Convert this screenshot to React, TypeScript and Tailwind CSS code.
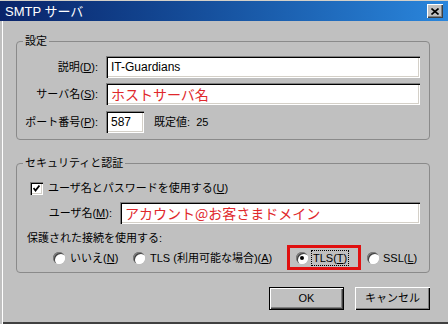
const ui = "font-['Liberation_Sans','Noto_Sans_CJK_JP',sans-serif]"
const sunken =
    'bg-white shadow-[inset_1px_1px_0_#808080,inset_2px_2px_0_#000000,inset_-1px_-1px_0_#ffffff,inset_-2px_-2px_0_#d4d0c8]'

function Radio({ checked }: { checked?: boolean }) {
    return (
        <span className="flex w-[12px] h-[12px] shrink-0 items-center justify-center rounded-full bg-white shadow-[inset_1px_1px_0_#808080,inset_2px_2px_0_#404040,inset_-1px_-1px_0_#ffffff]">
            {checked && <span className="w-[4px] h-[4px] rounded-full bg-black" />}
        </span>
    )
}

function Checkbox() {
    return (
        <span className={`flex w-[13px] h-[13px] shrink-0 items-center justify-center ${sunken}`}>
            <svg width="7" height="7" viewBox="0 0 7 7">
                <path d="M0.5 3 L2.5 5.5 L6.5 0.5" fill="none" stroke="#000" strokeWidth="1.8" />
            </svg>
        </span>
    )
}

function Field({ label, labelW, children, inputW }: { label: React.ReactNode; labelW: string; children: React.ReactNode; inputW: string }) {
    return (
        <div className="flex items-center gap-[8px] h-[22px]">
            <span className={`${labelW} text-right text-[11px] leading-[14px] whitespace-nowrap`}>{label}</span>
            <div className={`${inputW} h-[22px] flex items-center px-[5px] ${sunken}`}>{children}</div>
        </div>
    )
}

export default function App() {
    return (
        <div className={`w-[448px] h-[324px] bg-[#c0c0c0] flex flex-col border-t border-t-[#d4d0c8] text-black ${ui}`}>
            <div className="h-[20px] shrink-0 flex items-center justify-between pl-[5px] pr-[5px] bg-linear-to-r from-[#0a246a] to-[#2a86dc]">
                <span className="text-white text-[13px] leading-none">SMTP サーバ</span>
                <span className="flex w-[16px] h-[14px] items-center justify-center bg-[#c0c0c0] shadow-[inset_1px_1px_0_#ffffff,inset_-1px_-1px_0_#404040,inset_-2px_-2px_0_#808080]">
                    <svg width="8" height="7" viewBox="0 0 8 7">
                        <path d="M0.5 0.5 L7.5 6.5 M7.5 0.5 L0.5 6.5" stroke="#000" strokeWidth="1.6" />
                    </svg>
                </span>
            </div>

            <div className="flex-1 flex flex-col pl-[16px] pr-[18px] shadow-[inset_2px_0_0_#c0c0c0,inset_3px_0_0_#ffffff,inset_0_-2px_0_#404040]">
                <fieldset className="mt-[13px] border border-[#8a8a8a] rounded-[4px]">
                    <legend className="ml-[6px] px-[2px] text-[11px] leading-[14px]">設定</legend>
                    <div className="flex flex-col pt-[8px] pb-[6px]">
                        <Field label={<>説明(<u>D</u>):</>} labelW="w-[81px]" inputW="w-[314px]">
                            <span className="text-[12px] font-['Liberation_Sans',sans-serif]">IT-Guardians</span>
                        </Field>
                        <div className="mt-[5px]">
                            <Field label={<>サーバ名(<u>S</u>):</>} labelW="w-[81px]" inputW="w-[314px]">
                                <span className="text-[14px] leading-none text-[#e0282c] font-['Noto_Sans_CJK_JP',sans-serif]">ホストサーバ名</span>
                            </Field>
                        </div>
                        <div className="mt-[6px] flex items-center">
                            <Field label={<>ポート番号(<u>P</u>):</>} labelW="w-[81px]" inputW="w-[38px]">
                                <span className="text-[12px]">587</span>
                            </Field>
                            <span className="ml-[10px] text-[11px] leading-[14px]">既定値:&nbsp; 25</span>
                        </div>
                    </div>
                </fieldset>

                <fieldset className="mt-[16px] border border-[#8a8a8a] rounded-[4px]">
                    <legend className="ml-[6px] px-[2px] text-[11px] leading-[14px]">セキュリティと認証</legend>
                    <div className="flex flex-col pt-[10px] pb-[2px]">
                        <div className="h-[16px] flex items-center gap-[5px] pl-[13px]">
                            <Checkbox />
                            <span className="text-[11px] leading-[14px]">ユーザ名とパスワードを使用する(<u>U</u>)</span>
                        </div>
                        <div className="mt-[6px]">
                            <Field label={<>ユーザ名(<u>M</u>):</>} labelW="w-[95px]" inputW="w-[300px]">
                                <span className="text-[14px] leading-none text-[#e0282c] font-['Noto_Sans_CJK_JP',sans-serif]">アカウント@お客さまドメイン</span>
                            </Field>
                        </div>
                        <div className="mt-[7px] pl-[10px] text-[11px] leading-[14px]">保護された接続を使用する:</div>
                        <div className="h-[25px] flex items-center pl-[36px] text-[11px] leading-[14px]">
                            <div className="w-[80px] flex items-center gap-[5px]">
                                <Radio />
                                <span>いいえ(<u>N</u>)</span>
                            </div>
                            <div className="w-[154px] flex items-center gap-[5px]">
                                <Radio />
                                <span className="whitespace-nowrap">TLS (利用可能な場合)(<u>A</u>)</span>
                            </div>
                            <div className="w-[74px] h-[25px] flex items-center gap-[3px] pl-[6px] border-[3px] border-[#e01010]">
                                <Radio checked />
                                <span className="border border-dotted border-black px-[1px]">TLS(<u>T</u>)</span>
                            </div>
                            <div className="ml-[6px] flex items-center gap-[4px]">
                                <Radio />
                                <span>SSL(<u>L</u>)</span>
                            </div>
                        </div>
                    </div>
                </fieldset>

                <div className="mt-[14px] flex justify-end gap-[11px] text-[11px]">
                    <button className="w-[75px] h-[23px] border border-black bg-[#c0c0c0] shadow-[inset_1px_1px_0_#ffffff,inset_-1px_-1px_0_#404040,inset_-2px_-2px_0_#808080]">
                        OK
                    </button>
                    <button className="w-[75px] h-[23px] bg-[#c0c0c0] shadow-[inset_1px_1px_0_#ffffff,inset_-1px_-1px_0_#000000,inset_-2px_-2px_0_#808080]">
                        キャンセル
                    </button>
                </div>
            </div>
        </div>
    )
}
